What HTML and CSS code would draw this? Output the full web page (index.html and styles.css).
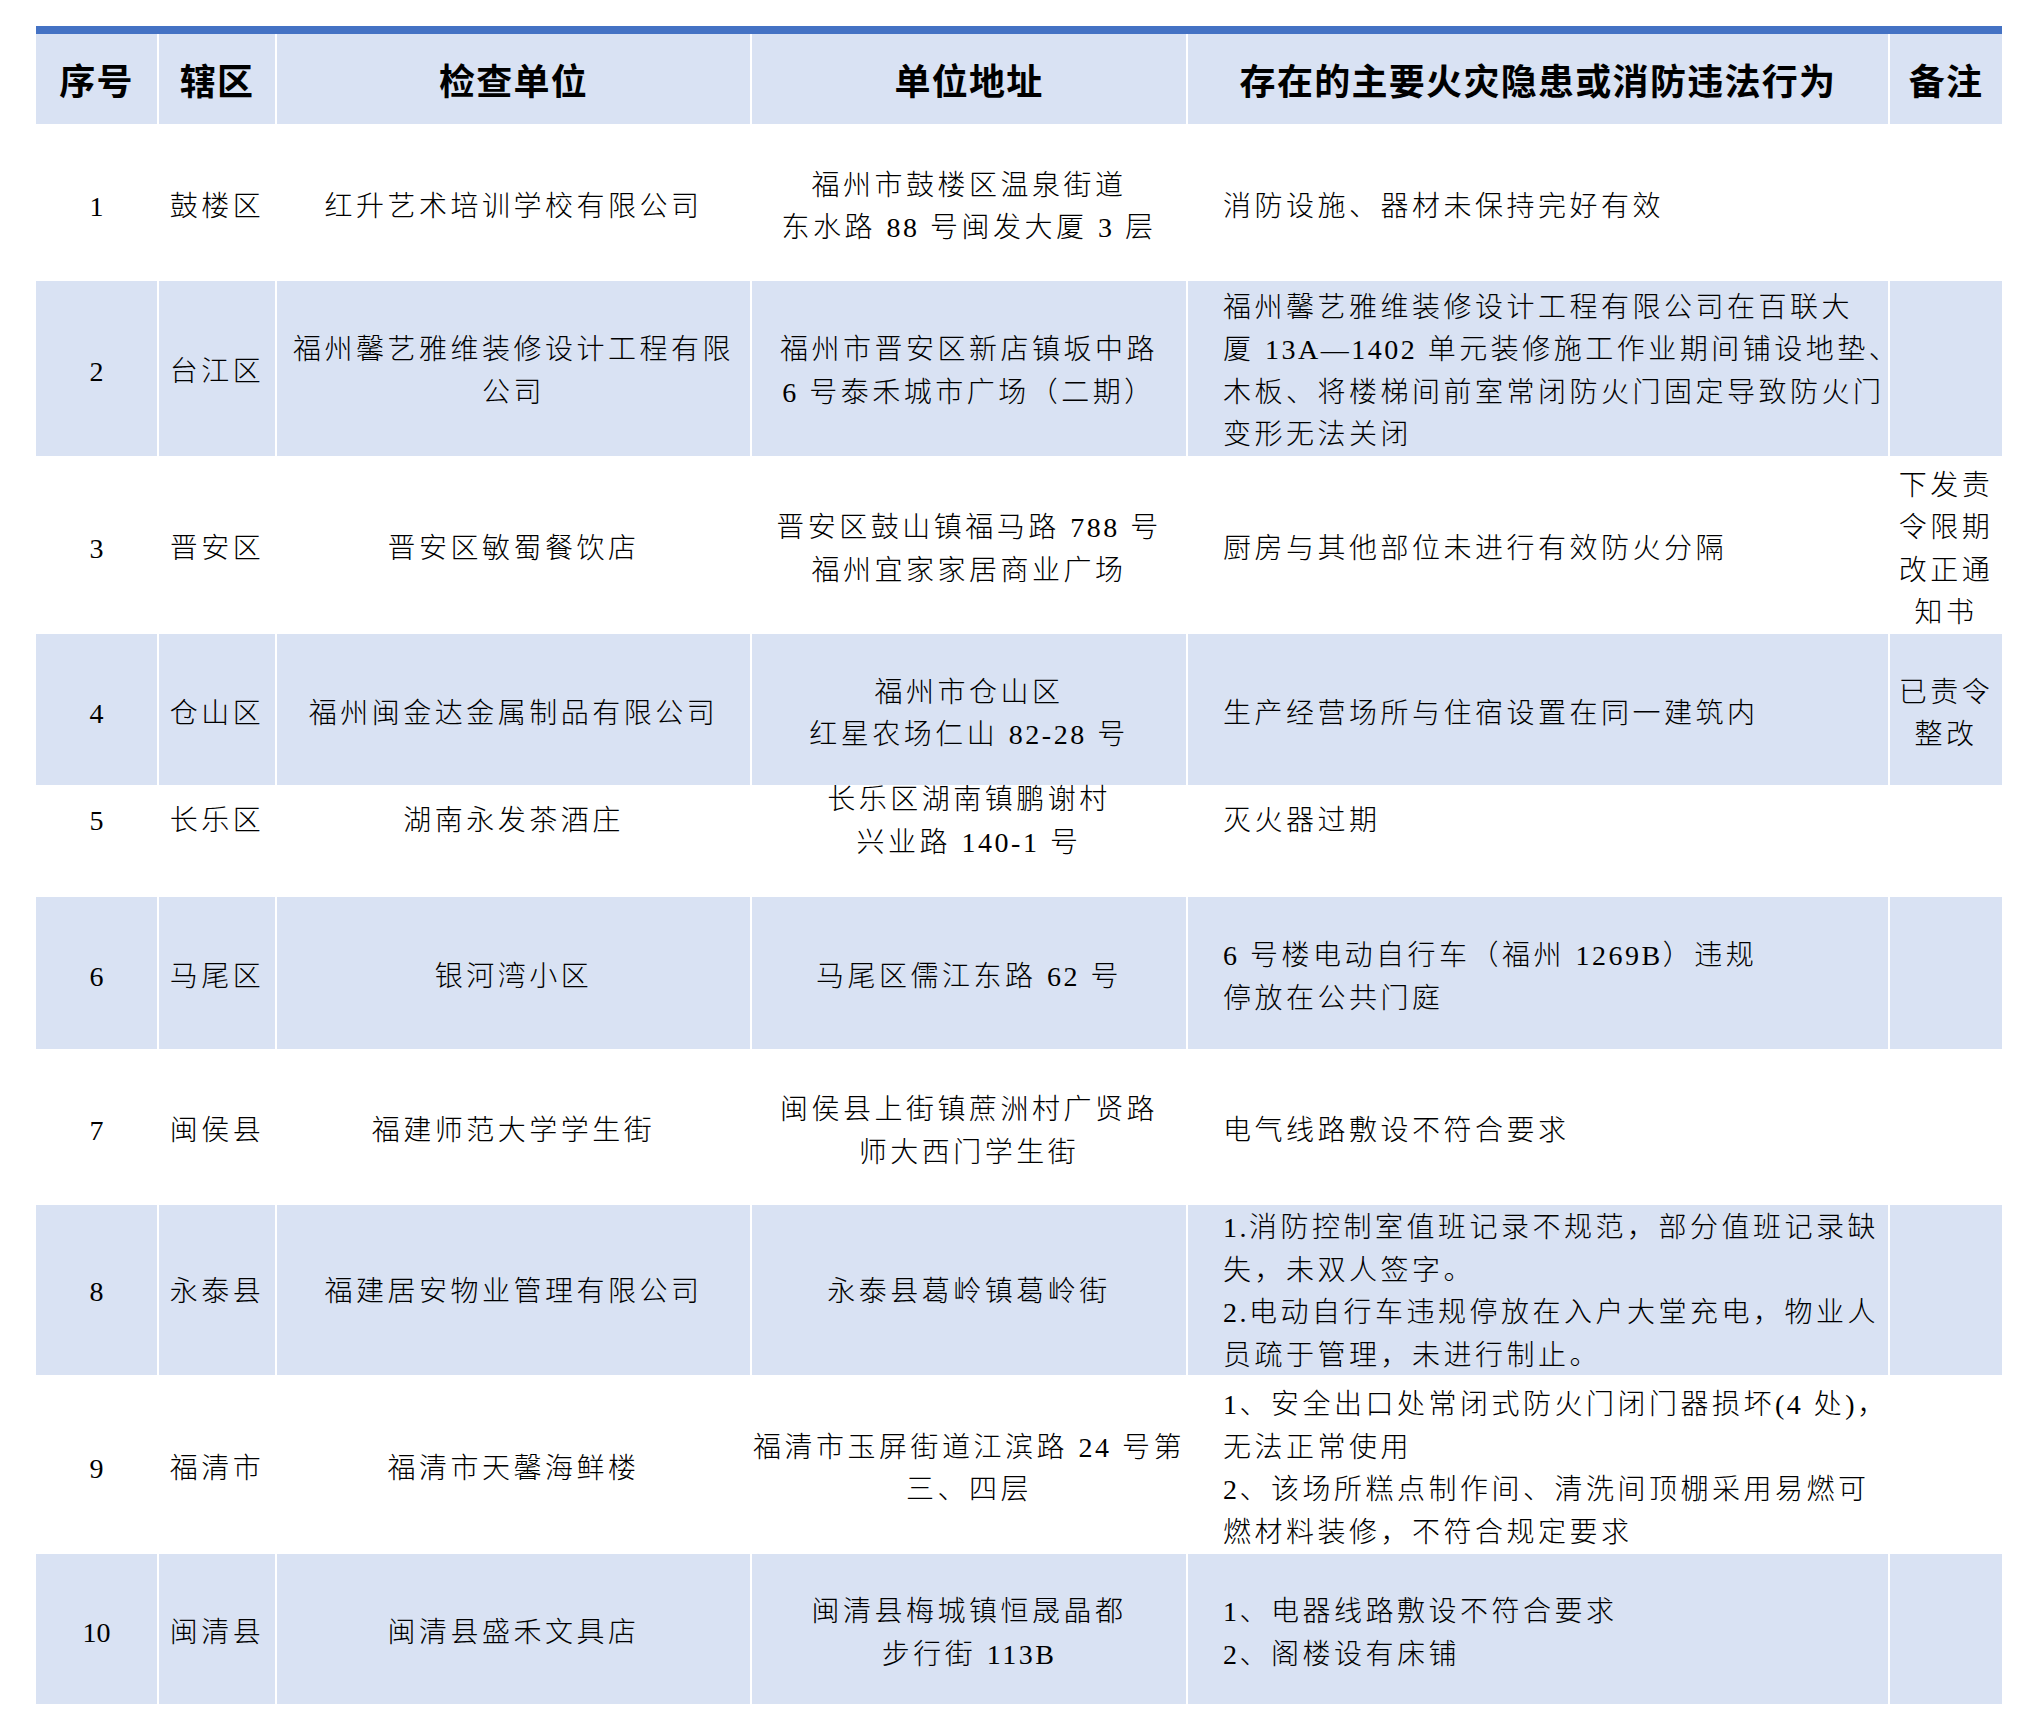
FILE: index.html
```html
<!DOCTYPE html>
<html lang="zh-CN">
<head>
<meta charset="utf-8">
<title>检查单位火灾隐患</title>
<link rel="stylesheet" href="styles.css">
</head>
<body>
<div class="sheet">
  <div class="row head">
    <div class="c">序号</div>
    <div class="c">辖区</div>
    <div class="c">检查单位</div>
    <div class="c">单位地址</div>
    <div class="c">存在的主要火灾隐患或消防违法行为</div>
    <div class="c">备注</div>
  </div>
  <div class="row r1">
    <div class="c num">1</div>
    <div class="c">鼓楼区</div>
    <div class="c">红升艺术培训学校有限公司</div>
    <div class="c"><div class="t">福州市鼓楼区温泉街道<br>东水路 <span class="n">88</span> 号闽发大厦 <span class="n">3</span> 层</div></div>
    <div class="c l">消防设施、器材未保持完好有效</div>
    <div class="c"></div>
  </div>
  <div class="row r2 alt">
    <div class="c num">2</div>
    <div class="c">台江区</div>
    <div class="c"><div class="t">福州馨艺雅维装修设计工程有限<br>公司</div></div>
    <div class="c"><div class="t">福州市晋安区新店镇坂中路<br><span class="n">6</span> 号泰禾城市广场（二期）</div></div>
    <div class="c l"><div class="t">福州馨艺雅维装修设计工程有限公司在百联大<br>厦 <span class="n">13A—1402</span> 单元装修施工作业期间铺设地垫、<br>木板、将楼梯间前室常闭防火门固定导致防火门<br>变形无法关闭</div></div>
    <div class="c"></div>
  </div>
  <div class="row r3">
    <div class="c num">3</div>
    <div class="c">晋安区</div>
    <div class="c">晋安区敏蜀餐饮店</div>
    <div class="c"><div class="t">晋安区鼓山镇福马路 <span class="n">788</span> 号<br>福州宜家家居商业广场</div></div>
    <div class="c l">厨房与其他部位未进行有效防火分隔</div>
    <div class="c"><div class="t">下发责<br>令限期<br>改正通<br>知书</div></div>
  </div>
  <div class="row r4 alt">
    <div class="c num">4</div>
    <div class="c">仓山区</div>
    <div class="c">福州闽金达金属制品有限公司</div>
    <div class="c"><div class="t">福州市仓山区<br>红星农场仁山 <span class="n">82-28</span> 号</div></div>
    <div class="c l">生产经营场所与住宿设置在同一建筑内</div>
    <div class="c"><div class="t">已责令<br>整改</div></div>
  </div>
  <div class="row r5">
    <div class="c num">5</div>
    <div class="c">长乐区</div>
    <div class="c">湖南永发茶酒庄</div>
    <div class="c"><div class="t">长乐区湖南镇鹏谢村<br>兴业路 <span class="n">140-1</span> 号</div></div>
    <div class="c l">灭火器过期</div>
    <div class="c"></div>
  </div>
  <div class="row r6 alt">
    <div class="c num">6</div>
    <div class="c">马尾区</div>
    <div class="c">银河湾小区</div>
    <div class="c"><div class="t">马尾区儒江东路 <span class="n">62</span> 号</div></div>
    <div class="c l"><div class="t"><span class="n">6</span> 号楼电动自行车（福州 <span class="n">1269B</span>）违规<br>停放在公共门庭</div></div>
    <div class="c"></div>
  </div>
  <div class="row r7">
    <div class="c num">7</div>
    <div class="c">闽侯县</div>
    <div class="c">福建师范大学学生街</div>
    <div class="c"><div class="t">闽侯县上街镇蔗洲村广贤路<br>师大西门学生街</div></div>
    <div class="c l">电气线路敷设不符合要求</div>
    <div class="c"></div>
  </div>
  <div class="row r8 alt">
    <div class="c num">8</div>
    <div class="c">永泰县</div>
    <div class="c">福建居安物业管理有限公司</div>
    <div class="c">永泰县葛岭镇葛岭街</div>
    <div class="c l"><div class="t"><span class="n">1.</span>消防控制室值班记录不规范，部分值班记录缺<br>失，未双人签字。<br><span class="n">2.</span>电动自行车违规停放在入户大堂充电，物业人<br>员疏于管理，未进行制止。</div></div>
    <div class="c"></div>
  </div>
  <div class="row r9">
    <div class="c num">9</div>
    <div class="c">福清市</div>
    <div class="c">福清市天馨海鲜楼</div>
    <div class="c"><div class="t">福清市玉屏街道江滨路 <span class="n">24</span> 号第<br>三、四层</div></div>
    <div class="c l"><div class="t"><span class="n">1</span>、安全出口处常闭式防火门闭门器损坏<span class="n">(4</span> 处<span class="n">)</span>，<br>无法正常使用<br><span class="n">2</span>、该场所糕点制作间、清洗间顶棚采用易燃可<br>燃材料装修，不符合规定要求</div></div>
    <div class="c"></div>
  </div>
  <div class="row r10 alt">
    <div class="c num">10</div>
    <div class="c">闽清县</div>
    <div class="c">闽清县盛禾文具店</div>
    <div class="c"><div class="t">闽清县梅城镇恒晟晶都<br>步行街 <span class="n">113B</span></div></div>
    <div class="c l"><div class="t"><span class="n">1</span>、电器线路敷设不符合要求<br><span class="n">2</span>、阁楼设有床铺</div></div>
    <div class="c"></div>
  </div>
</div>
</body>
</html>
```

FILE: styles.css
```css
html, body {
  margin: 0;
  padding: 0;
  background: #ffffff;
}

.sheet {
  width: 1966px;
  padding: 26px 0 0 36px;
  font-family: "Liberation Serif", "Noto Sans CJK SC", serif;
  font-size: 28px;
  font-weight: 300;
  letter-spacing: 3.5px;
  line-height: 42.5px;
  color: #000000;
}

.row {
  display: grid;
  grid-template-columns: 121px 118px 475px 436px 702px 114px;
  grid-template-rows: 100%;
  box-sizing: border-box;
}

.alt {
  background: #d9e2f3;
}

.head {
  height: 98px;
  border-top: 8px solid #4472c4;
  background: #d9e2f3;
  font-family: "Noto Sans CJK SC", sans-serif;
  font-size: 36px;
  font-weight: 700;
  letter-spacing: 1.3px;
}

.c {
  display: flex;
  align-items: center;
  justify-content: center;
  text-align: center;
  box-sizing: border-box;
  border-left: 2px solid #ffffff;
  white-space: nowrap;
  min-height: 0;
}

.t {
  display: block;
}

.row:not(.head) .c {
  padding-top: 9px;
}

.c:first-child {
  border-left: 0;
}

.c.l {
  justify-content: flex-start;
  text-align: left;
  padding-left: 35px;
}

.num {
  letter-spacing: 0;
}

.n {
  letter-spacing: 2.5px;
}

.r1 { height: 157px; }
.r2 { height: 175px; }
.row.r2 .c { padding-top: 6.5px; }
.r3 { height: 178px; }
.r4 { height: 151px; }
.r5 { height: 112px; }
.row.r5 .c { padding-top: 0; padding-bottom: 39px; }
.r6 { height: 152px; }
.r7 { height: 156px; }
.r8 { height: 170px; }
.row.r8 .c { padding-top: 4px; }
.r9 { height: 179px; }
.r10 { height: 150px; }
```
